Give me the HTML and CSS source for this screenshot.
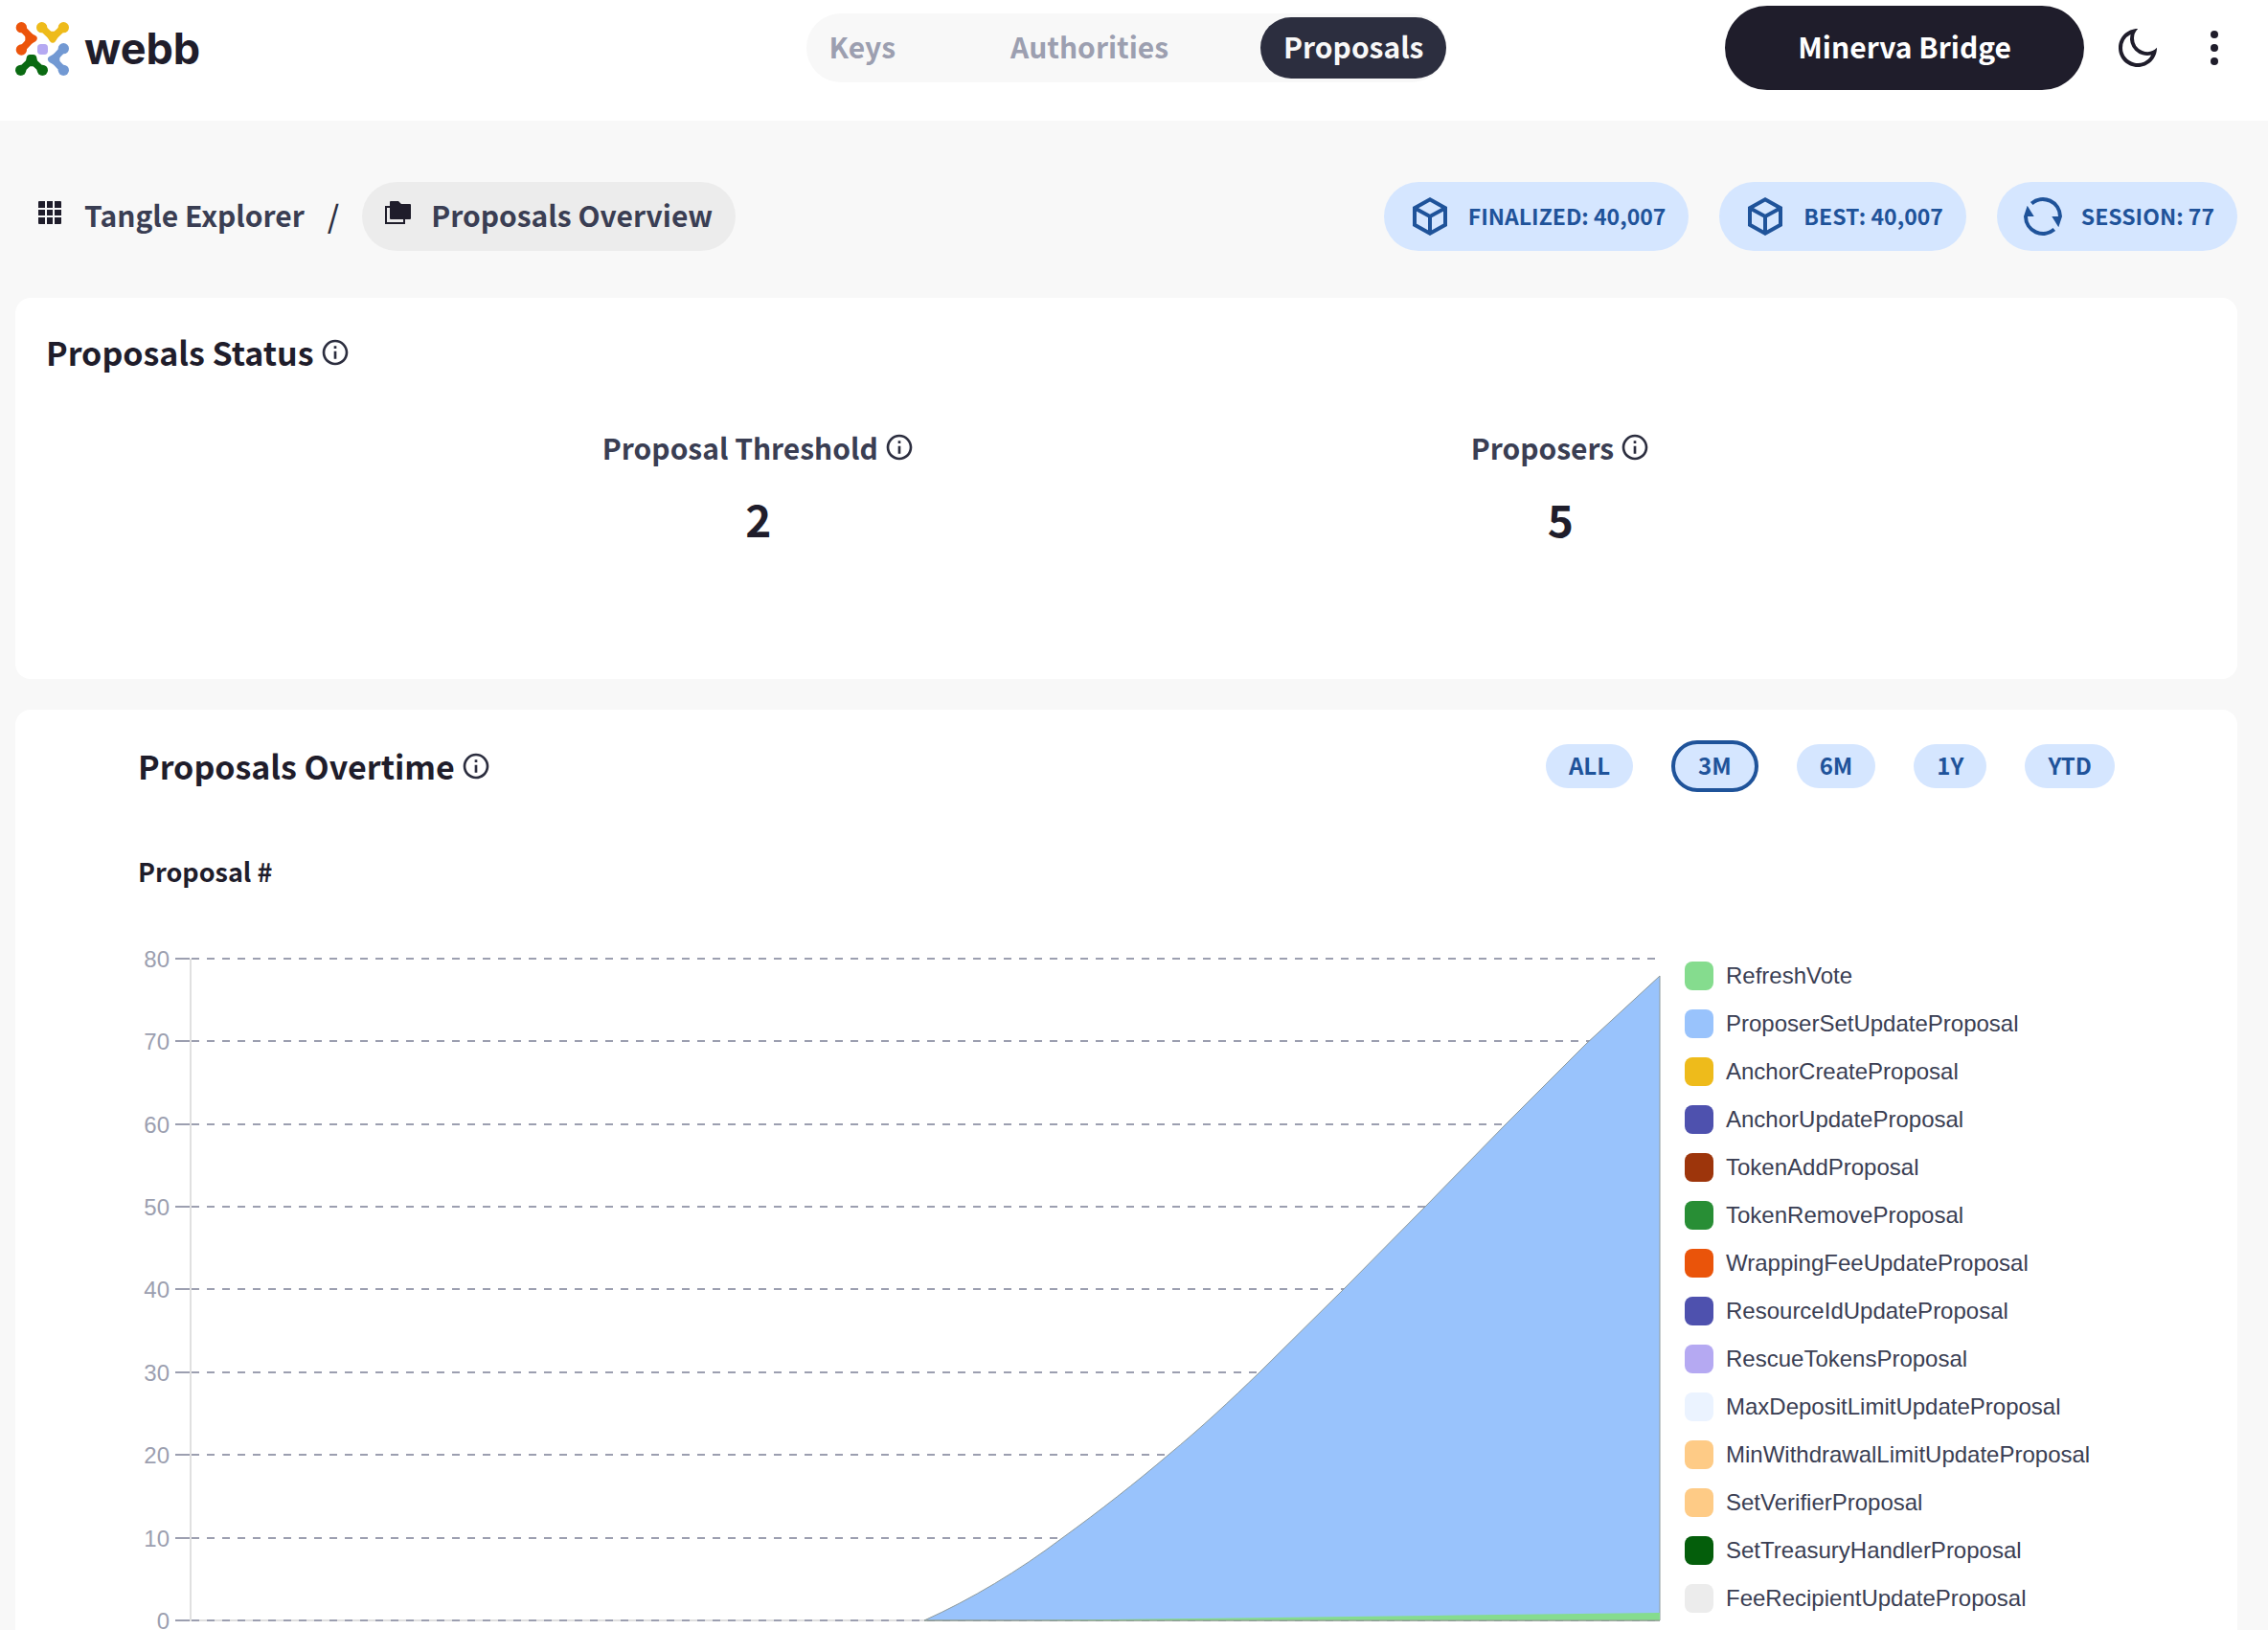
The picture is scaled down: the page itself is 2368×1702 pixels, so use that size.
FILE: index.html
```html
<!DOCTYPE html>
<html lang="en">
<head>
<meta charset="utf-8">
<meta name="viewport" content="width=device-width, initial-scale=1">
<title>Proposals Overview – Tangle Explorer</title>
<link rel="stylesheet" href="styles.css">
</head>
<body>
<svg class="sprite" aria-hidden="true">
  <symbol id="info" viewBox="0 0 24 24"><path fill="currentColor" d="M12 22C6.477 22 2 17.523 2 12S6.477 2 12 2s10 4.477 10 10-4.477 10-10 10zm0-2a8 8 0 1 0 0-16 8 8 0 0 0 0 16zM11 7h2v2h-2V7zm0 4h2v6h-2v-6z"/></symbol>
  <symbol id="cube" viewBox="0 0 48 48"><path fill="none" stroke="currentColor" stroke-width="4" d="M24 6.300L40 15.200V32.800L24 41.700L8 32.800V15.200ZM8 15.200L24 24L40 15.200M24 24V41.700"/></symbol>
</svg>

<header class="topbar">
  <a class="brand" href="#" aria-label="webb">
    <svg class="brand-mark" viewBox="0 0 168 168" aria-hidden="true">
      <g stroke-width="22" stroke-linejoin="round" stroke-linecap="round">
        <g fill="#ec540b" stroke="#ec540b"><path fill="none" d="M19 17L52 52L19 87"/><path d="M42 44L57 52L42 60Z"/><g stroke="none"><circle cx="19" cy="17" r="17"/><circle cx="19" cy="87" r="17"/></g></g>
        <g fill="#eebb1b" stroke="#eebb1b"><path fill="none" d="M83 17L117 49L151 17"/><path d="M109 40L117 54L125 40Z"/><g stroke="none"><circle cx="83" cy="17" r="17"/><circle cx="151" cy="17" r="17"/></g></g>
        <g fill="#7299d3" stroke="#7299d3"><path fill="none" d="M151 83L119 117L151 151"/><path d="M128 109L113 117L128 125Z"/><g stroke="none"><circle cx="151" cy="83" r="17"/><circle cx="151" cy="151" r="17"/></g></g>
        <g fill="#0a6a12" stroke="#0a6a12"><path fill="none" d="M17 151L51 119L85 151"/><path d="M43 128L46 113H56L59 128Z"/><g stroke="none"><circle cx="17" cy="151" r="17"/><circle cx="85" cy="151" r="17"/></g></g>
      </g>
      <rect x="69" y="69" width="33" height="33" rx="11" fill="#b5a9f2"/>
    </svg>
    <span class="brand-name">webb</span>
  </a>
  <nav class="tabs" aria-label="Main">
    <a class="tab" href="#">Keys</a>
    <a class="tab" href="#">Authorities</a>
    <a class="tab tab-active" href="#" aria-current="page">Proposals</a>
  </nav>
  <div class="actions">
    <button class="network" type="button">Minerva Bridge</button>
    <button class="icon-button" type="button" aria-label="Dark mode"><svg class="icon-lg" viewBox="0 0 24 24"><path fill="currentColor" d="M10 7a7 7 0 0 0 12 4.900v.1c0 5.523-4.477 10-10 10S2 17.523 2 12 6.477 2 12 2h.1A6.979 6.979 0 0 0 10 7zm-6 5a8 8 0 0 0 15.062 3.762A9 9 0 0 1 8.238 4.938 7.999 7.999 0 0 0 4 12z"/></svg></button>
    <button class="icon-button" type="button" aria-label="More"><svg class="icon-lg" viewBox="0 0 48 48" fill="currentColor"><circle cx="24" cy="10" r="4"/><circle cx="24" cy="24" r="4"/><circle cx="24" cy="38" r="4"/></svg></button>
  </div>
</header>

<main class="page">
  <div class="subheader">
    <nav class="crumbs" aria-label="Breadcrumb">
      <a class="crumb" href="#">
        <svg class="crumb-icon" viewBox="0 0 32 32" fill="#1f1d2b" aria-hidden="true"><path d="M1 0H7V7H0V1A1 1 0 0 1 1 0ZM9 0H15V7H9ZM17 0H23A1 1 0 0 1 24 1V7H17ZM0 9H7V15H0ZM9 9H15V15H9ZM17 9H24V15H17ZM0 17H7V24H1A1 1 0 0 1 0 23ZM9 17H15V24H9ZM17 17H24V23A1 1 0 0 1 23 24H17Z"/></svg>
        Tangle Explorer
      </a>
      <span class="slash" aria-hidden="true">/</span>
      <a class="crumb crumb-current" href="#" aria-current="page">
        <svg class="crumb-icon" viewBox="0 0 32 32" aria-hidden="true"><path fill="#1f1d2b" d="M7 0H14L17 3H26A1 1 0 0 1 27 4V18A1 1 0 0 1 26 19H6A1 1 0 0 1 5 18V1A1 1 0 0 1 6 0Z"/><path fill="none" stroke="#1f1d2b" stroke-width="2" d="M5 6H1V23H20V19"/></svg>
        Proposals Overview
      </a>
    </nav>
    <div class="chips">
      <div class="chip"><svg class="icon-lg" aria-hidden="true"><use href="#cube"/></svg><span>FINALIZED: 40,007</span></div>
      <div class="chip"><svg class="icon-lg" aria-hidden="true"><use href="#cube"/></svg><span>BEST: 40,007</span></div>
      <div class="chip"><svg class="icon-lg" viewBox="0 0 48 48" aria-hidden="true"><path fill="none" stroke="currentColor" stroke-width="4" d="M12.200 10.500A18 18 0 0 1 42 24M35.800 37.500A18 18 0 0 1 6 24"/><path fill="currentColor" d="M33.300 24H44L40.300 35.300ZM14.700 24H4L7.700 12.700Z"/></svg><span>SESSION: 77</span></div>
    </div>
  </div>

  <section class="card status">
    <h1 class="title">Proposals Status <svg class="icon-sm" aria-hidden="true"><use href="#info"/></svg></h1>
    <dl class="stats">
      <div class="stat"><dt>Proposal Threshold <svg class="icon-sm" aria-hidden="true"><use href="#info"/></svg></dt><dd>2</dd></div>
      <div class="stat"><dt>Proposers <svg class="icon-sm" aria-hidden="true"><use href="#info"/></svg></dt><dd>5</dd></div>
    </dl>
  </section>

  <section class="card overtime">
    <div class="overtime-head">
      <h2 class="title">Proposals Overtime <svg class="icon-sm" aria-hidden="true"><use href="#info"/></svg></h2>
      <div class="ranges">
        <button class="range" type="button">ALL</button>
        <button class="range range-active" type="button" aria-pressed="true">3M</button>
        <button class="range" type="button">6M</button>
        <button class="range" type="button">1Y</button>
        <button class="range" type="button">YTD</button>
      </div>
    </div>
    <h3 class="axis-title">Proposal #</h3>
    <div class="chart-row">
      <svg class="chart" viewBox="0 0 1589 716" role="img" aria-label="Proposals over time">
        <g class="grid">
          <path d="M56 15H1589M56 101H1589M56 188H1589M56 274H1589M56 360H1589M56 447H1589M56 533H1589M56 620H1589"/>
        </g>
        <path class="axis" d="M55 15V706H1589"/>
        <path class="grid" d="M56 706H1589"/>
        <path class="ticks" d="M39 15H54M39 101H54M39 188H54M39 274H54M39 360H54M39 447H54M39 533H54M39 620H54M39 706H54"/>
        <g class="labels">
          <text x="33" y="24">80</text><text x="33" y="110">70</text><text x="33" y="197">60</text>
          <text x="33" y="283">50</text><text x="33" y="369">40</text><text x="33" y="456">30</text>
          <text x="33" y="542">20</text><text x="33" y="629">10</text><text x="33" y="715">0</text>
        </g>
        <path class="area-proposer" d="M821 706C870 684 920 654 965 620C1005 591 1042 562 1076 533C1110 505 1141 476 1171 447L1259 360L1344 274L1428 188L1512 104L1589 33V706Z"/>
        <path class="area-refresh" d="M925 706L1100 704L1350 701L1589 698V706Z"/>
        <path class="area-base" d="M821 706H1589"/>
      </svg>
      <ul class="legend">
        <li><i class="swatch c1"></i>RefreshVote</li>
        <li><i class="swatch c2"></i>ProposerSetUpdateProposal</li>
        <li><i class="swatch c3"></i>AnchorCreateProposal</li>
        <li><i class="swatch c4"></i>AnchorUpdateProposal</li>
        <li><i class="swatch c5"></i>TokenAddProposal</li>
        <li><i class="swatch c6"></i>TokenRemoveProposal</li>
        <li><i class="swatch c7"></i>WrappingFeeUpdateProposal</li>
        <li><i class="swatch c4"></i>ResourceIdUpdateProposal</li>
        <li><i class="swatch c8"></i>RescueTokensProposal</li>
        <li><i class="swatch c9"></i>MaxDepositLimitUpdateProposal</li>
        <li><i class="swatch c10"></i>MinWithdrawalLimitUpdateProposal</li>
        <li><i class="swatch c10"></i>SetVerifierProposal</li>
        <li><i class="swatch c11"></i>SetTreasuryHandlerProposal</li>
        <li><i class="swatch c12"></i>FeeRecipientUpdateProposal</li>
      </ul>
    </div>
  </section>
</main>
</body>
</html>
```
FILE: styles.css
```css
:root {
  --ink: #1f1d2b;
  --ink-soft: #3a3e53;
  --muted: #9c9fb0;
  --blue: #1f539a;
  --blue-bg: #d5e6ff;
  --ui: "Noto Sans CJK SC", "Noto Sans", sans-serif;
}
* { box-sizing: border-box; }
body {
  margin: 0;
  background: #f8f8f8;
  color: var(--ink);
  font-family: var(--ui);
  font-weight: 700;
  font-size: 30px;
  line-height: 40px;
}
a { color: inherit; text-decoration: none; }
button { font: inherit; border: 0; cursor: pointer; }
h1, h2, h3, dl, dd, ul { margin: 0; padding: 0; }
svg { display: block; flex: none; }
.sprite { position: absolute; width: 0; height: 0; }
.icon-sm { width: 32px; height: 32px; color: #2c2e3f; }
.icon-lg { width: 48px; height: 48px; }

/* Top bar */
.topbar {
  display: grid;
  grid-template-columns: 1fr auto 1fr;
  align-items: center;
  padding: 6px 32px 32px 16px;
  background: #fff;
}
.brand { display: flex; align-items: center; gap: 16px; padding-top: 2px; }
.brand-mark { width: 56px; height: 56px; }
.brand-name { font-family: Inter, sans-serif; font-size: 45px; line-height: 56px; }
.tabs {
  display: flex;
  gap: 72px;
  padding: 4px 0;
  border-radius: 36px;
  background: #f8f8f8;
}
.tab { padding: 10px 24px 14px; border-radius: 32px; color: var(--muted); }
.tab-active { background: #2c2e3f; color: #f8f8f8; }
.actions { display: flex; align-items: center; justify-content: flex-end; gap: 32px; }
.network {
  padding: 22px 76px 26px;
  border-radius: 44px;
  background: var(--ink);
  color: #fff;
}
.icon-button { padding: 0; background: none; color: var(--ink); }

/* Breadcrumbs and chain state */
.page { padding: 64px 32px 0 16px; }
.subheader { display: flex; justify-content: space-between; margin-bottom: 49px; }
.crumbs { display: flex; align-items: center; gap: 24px; color: var(--ink-soft); }
.crumb { display: flex; align-items: flex-start; gap: 16px; padding: 14px 0 18px 24px; }
.crumb-icon { width: 32px; height: 32px; margin-top: 6px; }
.crumb-current { padding-right: 24px; border-radius: 36px; background: #ececec; }
.slash { padding-bottom: 4px; color: #2c2e3f; font-size: 32px; font-weight: 500; }
.chips { display: flex; gap: 32px; }
.chip {
  display: flex;
  align-items: center;
  gap: 16px;
  padding: 12px 24px;
  border-radius: 36px;
  background: var(--blue-bg);
  color: var(--blue);
  font-size: 23px;
}
.chip span { padding-bottom: 3px; }

/* Cards */
.card { border-radius: 16px; background: #fff; }
.title {
  display: flex;
  align-items: center;
  gap: 6px;
  font-size: 34px;
  line-height: 48px;
}
.status { min-height: 398px; padding: 33px 32px; margin-bottom: 32px; }
.stats { display: flex; justify-content: space-evenly; margin-top: 55px; }
.stat { display: flex; flex-direction: column; align-items: center; gap: 30px; }
.stat dt { display: flex; align-items: center; gap: 6px; color: var(--ink-soft); }
.stat dd { font-size: 46px; line-height: 48px; }

.overtime { padding: 32px 128px 0; border-radius: 16px 16px 0 0; }
.overtime-head { display: flex; align-items: center; justify-content: space-between; }
.ranges { display: flex; align-items: center; gap: 40px; }
.range {
  padding: 2px 24px 4px;
  border-radius: 28px;
  background: var(--blue-bg);
  color: var(--blue);
  font-size: 24px;
}
.range-active { border: 4px solid var(--blue); }
.axis-title { margin: 63px 0 56px; font-size: 27px; line-height: 40px; }

.chart-row { display: flex; align-items: flex-start; gap: 26px; font-family: "Liberation Sans", Arial, sans-serif; font-weight: 400; font-size: 24px; }
.chart { flex: 1; min-width: 0; height: auto; overflow: visible; }
.grid { fill: none; stroke: var(--muted); stroke-width: 2; stroke-dasharray: 8 8; }
.ticks { stroke: var(--muted); stroke-width: 2; }
.axis { fill: none; stroke: #e0e0e0; stroke-width: 2; }
.labels { fill: var(--muted); text-anchor: end; }
.area-proposer { fill: #99c3fc; stroke: #8d9a9c; stroke-width: 1; }
.area-refresh { fill: #85dc8e; }
.area-base { stroke: #8d9a8c; stroke-width: 1; }

.legend { width: 449px; padding-top: 8px; list-style: none; color: var(--ink-soft); }
.legend li { display: flex; align-items: center; gap: 13px; height: 50px; }
.swatch { width: 30px; height: 30px; border-radius: 8px; }
.c1 { background: #85dc8e; }
.c2 { background: #99c3fc; }
.c3 { background: #eebb1b; }
.c4 { background: #4e51ae; }
.c5 { background: #9d350b; }
.c6 { background: #288e35; }
.c7 { background: #ea540a; }
.c8 { background: #b5a9f2; }
.c9 { background: #ebf3ff; }
.c10 { background: #fecb86; }
.c11 { background: #045e0b; }
.c12 { background: #ececec; }
```
